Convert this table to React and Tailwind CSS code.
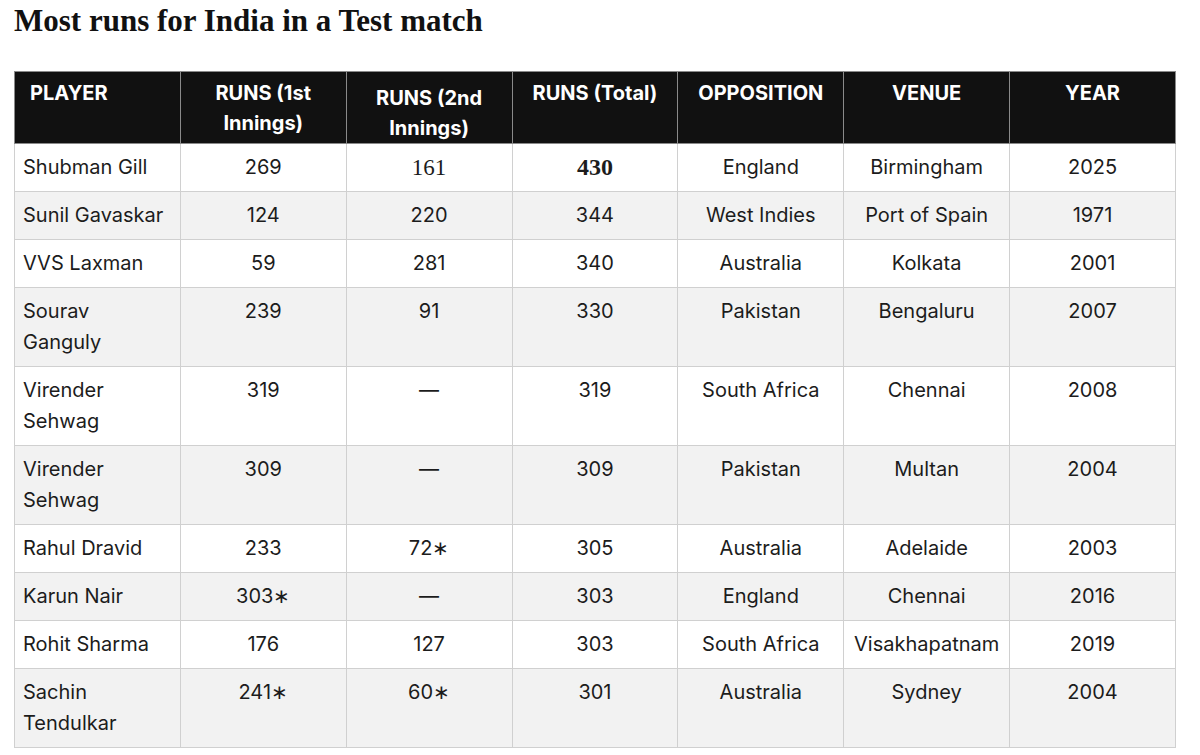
const rows = [
  ["Shubman Gill", "269", "161", "430", "England", "Birmingham", "2025"],
  ["Sunil Gavaskar", "124", "220", "344", "West Indies", "Port of Spain", "1971"],
  ["VVS Laxman", "59", "281", "340", "Australia", "Kolkata", "2001"],
  ["Sourav Ganguly", "239", "91", "330", "Pakistan", "Bengaluru", "2007"],
  ["Virender Sehwag", "319", "—", "319", "South Africa", "Chennai", "2008"],
  ["Virender Sehwag", "309", "—", "309", "Pakistan", "Multan", "2004"],
  ["Rahul Dravid", "233", "72∗", "305", "Australia", "Adelaide", "2003"],
  ["Karun Nair", "303∗", "—", "303", "England", "Chennai", "2016"],
  ["Rohit Sharma", "176", "127", "303", "South Africa", "Visakhapatnam", "2019"],
  ["Sachin Tendulkar", "241∗", "60∗", "301", "Australia", "Sydney", "2004"],
];

const headers = ["PLAYER", "RUNS (1st Innings)", "RUNS (2nd Innings)", "RUNS (Total)", "OPPOSITION", "VENUE", "YEAR"];

export default function App() {
  return (
    <div className="bg-white min-h-screen px-[14px] pt-[3px]" style={{ fontFamily: "Inter, 'Liberation Sans', sans-serif" }}>
      <h1 className="text-[31px] font-bold text-[#111] leading-[36px]" style={{ fontFamily: "'Liberation Serif', serif" }}>
        Most runs for India in a Test match
      </h1>
      <table className="mt-[32px] w-[1162px] table-fixed border-collapse border border-[#d0d0d0]">
        <thead>
          <tr className="bg-[#111111] text-white">
            {headers.map((h, i) => (
              <th
                key={h}
                className={`h-[72px] align-top border border-[#8a8a8a] pb-0 text-[20px] font-bold leading-[30px] ${i === 2 ? "pt-[11px]" : "pt-[6px]"} ${i === 0 ? "text-left pl-[15px] pr-[8px]" : "text-center px-[12px]"}`}
              >
                {h}
              </th>
            ))}
          </tr>
        </thead>
        <tbody>
          {rows.map((r, ri) => (
            <tr key={ri} className={ri % 2 === 1 ? "bg-[#f2f2f2]" : "bg-white"}>
              {r.map((c, ci) => {
                let extra = "";
                if (ri === 0 && ci === 2) extra = "text-[23px]";
                if (ri === 0 && ci === 3) extra = "text-[24px] font-bold";
                const serif = ri === 0 && (ci === 2 || ci === 3);
                return (
                  <td
                    key={ci}
                    className={`align-top border border-[#d0d0d0] py-[8px] px-[8px] text-[20px] leading-[31px] text-[#1c1c1c] ${ci === 0 ? "text-left" : "text-center"} ${extra}`}
                    style={serif ? { fontFamily: "'Liberation Serif', serif" } : undefined}
                  >
                    {c}
                  </td>
                );
              })}
            </tr>
          ))}
        </tbody>
      </table>
    </div>
  );
}
